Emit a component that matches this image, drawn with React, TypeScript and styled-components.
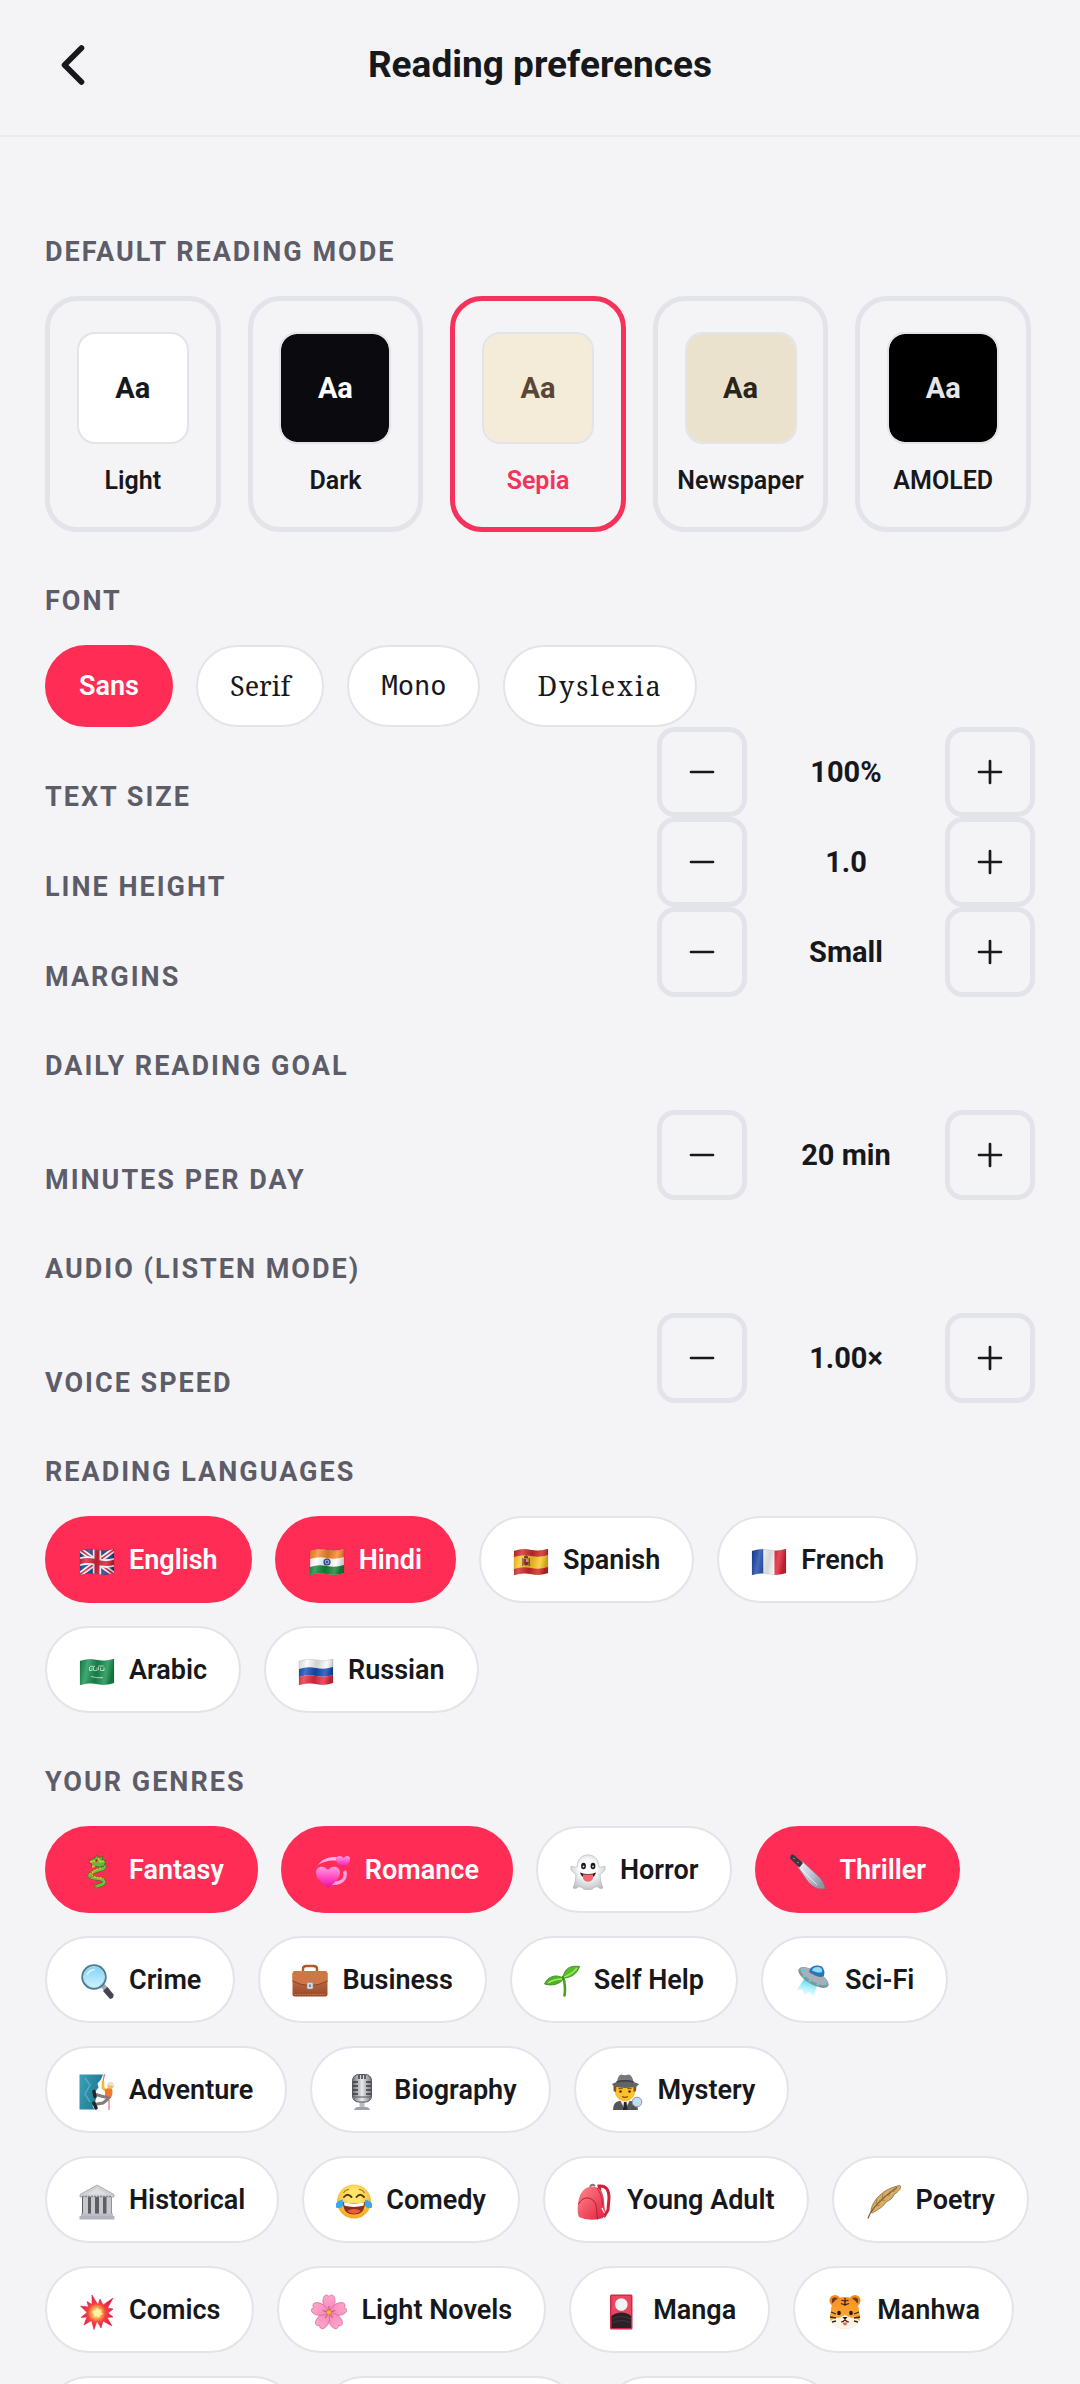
import React, { useState } from "react";
import styled, { createGlobalStyle } from "styled-components";

const color = {
  page: "#f4f4f7",
  ink: "#17181c",
  muted: "#5d5d69",
  line: "#e3e3ea",
  surface: "#ffffff",
  accent: "#ff2d55",
};

const GlobalStyle = createGlobalStyle`
  *, *::before, *::after { box-sizing: border-box; }
  body {
    margin: 0;
    background: ${color.page};
    color: ${color.ink};
    font-family: Roboto, "Noto Sans", sans-serif;
    -webkit-font-smoothing: antialiased;
  }
  button { font: inherit; color: inherit; cursor: pointer; margin: 0; }
`;

const Screen = styled.div`
  display: flex;
  flex-direction: column;
  height: 100vh;
  overflow: hidden;
  background: ${color.page};
`;

const Header = styled.header`
  flex: none;
  display: grid;
  grid-template-columns: 1fr auto 1fr;
  align-items: center;
  padding: 25px 45px 30px;
  border-bottom: 2px solid #ebebf0;
`;

const BackButton = styled.button`
  display: flex;
  align-items: center;
  justify-content: center;
  width: 56px;
  height: 80px;
  padding: 0;
  border: 0;
  background: none;
`;

const Title = styled.h1`
  margin: 0;
  font-size: 37px;
  line-height: 44px;
  font-weight: 700;
`;

const Content = styled.main`
  flex: 1;
  min-height: 0;
  overflow-y: auto;
  scrollbar-width: none;
  padding: 46px 45px;
`;

const SectionTitle = styled.h2`
  margin: 53px 0 28px;
  font-size: 27px;
  line-height: 32px;
  font-weight: 700;
  letter-spacing: 2px;
  text-transform: uppercase;
  color: ${color.muted};
`;

const ModeGrid = styled.div`
  display: grid;
  grid-template-columns: repeat(5, minmax(0, 1fr));
  gap: 27px;
  padding-right: 4px;
`;

const ModeCard = styled.button<{ $active: boolean }>`
  display: flex;
  flex-direction: column;
  align-items: center;
  gap: 22px;
  padding: 31px 0;
  border: 5px solid ${(p) => (p.$active ? "#f6315a" : color.line)};
  border-radius: 32px;
  background: none;
  color: ${(p) => (p.$active ? "#f6315a" : color.ink)};
  font-size: 25px;
  line-height: 30px;
  font-weight: 600;
`;

const Swatch = styled.span<{ $bg: string; $fg: string }>`
  display: flex;
  align-items: center;
  justify-content: center;
  width: 112px;
  height: 112px;
  border: 2px solid ${color.line};
  border-radius: 18px;
  background: ${(p) => p.$bg};
  background-clip: padding-box;
  color: ${(p) => p.$fg};
  font-size: 29px;
  font-weight: 700;
`;

const ChipRow = styled.div`
  display: flex;
  flex-wrap: wrap;
  gap: 23px;
`;

const Chip = styled.button<{ $active: boolean }>`
  display: inline-flex;
  align-items: center;
  gap: 14px;
  height: 87px;
  padding: 0 32px;
  border: 2px solid ${(p) => (p.$active ? color.accent : color.line)};
  border-radius: 44px;
  background: ${(p) => (p.$active ? color.accent : color.surface)};
  color: ${(p) => (p.$active ? "#fff" : color.ink)};
  font-size: 27px;
  line-height: 32px;
  font-weight: 600;
  white-space: nowrap;
`;

const PendingChip = styled.span<{ $width: number }>`
  width: ${(p) => p.$width}px;
  height: 87px;
  border: 2px solid ${color.line};
  border-radius: 44px;
  background: ${color.surface};
`;

const fontFaces = {
  sans: `font-family: Roboto, sans-serif; font-weight: 600;`,
  serif: `font-family: "Noto Serif", "Liberation Serif", serif; font-weight: 400;`,
  mono: `font-family: "DejaVu Sans Mono", monospace; font-weight: 400;`,
  dyslexia: `font-family: "Noto Serif", "Liberation Serif", serif; font-weight: 400; letter-spacing: 2px;`,
};

const FontChip = styled(Chip)<{ $face: keyof typeof fontFaces }>`
  height: 82px;
  ${(p) => fontFaces[p.$face]}
`;

const SettingRow = styled.div`
  display: flex;
  justify-content: space-between;
  align-items: flex-end;
`;

const SettingLabel = styled.span`
  font-size: 27px;
  line-height: 40px;
  font-weight: 700;
  letter-spacing: 2px;
  text-transform: uppercase;
  color: ${color.muted};
`;

const Stepper = styled.div`
  display: flex;
  align-items: center;
`;

const StepButton = styled.button`
  display: flex;
  align-items: center;
  justify-content: center;
  width: 90px;
  height: 90px;
  padding: 0;
  border: 5px solid ${color.line};
  border-radius: 18px;
  background: none;
`;

const StepValue = styled.output`
  width: 198px;
  text-align: center;
  font-size: 29px;
  line-height: 34px;
  font-weight: 700;
`;

/* ---------- pictograms, drawn on a 36 unit square ---------- */

const Pictogram = styled.svg`
  flex: none;
  width: 36px;
  height: 40px;
`;

const wave = (y: number, h: number) =>
  `M1 ${y + 1}Q9.5 ${y - 2} 18 ${y}T35 ${y - 1}V${y + h - 1}Q26.5 ${y + h + 2} 18 ${y + h}T1 ${y + h + 1}Z`;

const FlagShade = () => (
  <>
    <defs>
      <linearGradient id="flagShade" x1="0" x2="1" y1="0" y2="0.15">
        <stop offset="0" stopColor="#000" stopOpacity="0.12" />
        <stop offset="0.25" stopColor="#fff" stopOpacity="0.2" />
        <stop offset="0.55" stopColor="#000" stopOpacity="0.16" />
        <stop offset="0.82" stopColor="#fff" stopOpacity="0.16" />
        <stop offset="1" stopColor="#000" stopOpacity="0.2" />
      </linearGradient>
    </defs>
    <path d={wave(6, 24)} fill="url(#flagShade)" />
    <path d={wave(6, 24)} fill="none" stroke="#000" strokeOpacity="0.16" strokeWidth="0.7" />
  </>
);

const art: Record<string, React.ReactNode> = {
  uk: (
    <>
      <defs>
        <clipPath id="ukClip">
          <path d={wave(6, 24)} />
        </clipPath>
      </defs>
      <g clipPath="url(#ukClip)">
        <path d="M0 3h36v30H0z" fill="#1f3f94" />
        <path d="M0 5L36 31M0 31L36 5" stroke="#fff" strokeWidth="5" />
        <path d="M0 5L36 31M0 31L36 5" stroke="#d8233a" strokeWidth="1.8" />
        <path d="M18 2v32M0 18q9-3 18 0t18 0" stroke="#fff" strokeWidth="8.4" fill="none" />
        <path d="M18 2v32M0 18q9-3 18 0t18 0" stroke="#d8233a" strokeWidth="5" fill="none" />
      </g>
      <FlagShade />
    </>
  ),
  india: (
    <>
      <path d={wave(6, 24)} fill="#fff" />
      <path d={wave(6, 8)} fill="#f98a2b" />
      <path d={wave(22, 8)} fill="#16893a" />
      <circle cx="18" cy="18" r="3" fill="#a9b6e0" stroke="#1e3f96" strokeWidth="1.2" />
      <circle cx="18" cy="18" r="1" fill="#1e3f96" />
      <FlagShade />
    </>
  ),
  spain: (
    <>
      <path d={wave(6, 24)} fill="#fcc926" />
      <path d={wave(6, 6)} fill="#d3282c" />
      <path d={wave(24, 6)} fill="#d3282c" />
      <path d="M9 14h1.5v8H9zM15.5 14H17v8h-1.5z" fill="#8a5a2a" />
      <path d="M10.5 15h5v5q-2.5 3.5-5 0z" fill="#8f1f27" />
      <path d="M11 12.5l2-1.5 2 1.5v2h-4z" fill="#6b3415" />
      <path d="M13 15h2.5v3H13z" fill="#d9a06f" />
      <FlagShade />
    </>
  ),
  france: (
    <>
      <defs>
        <clipPath id="frClip">
          <path d={wave(6, 24)} />
        </clipPath>
      </defs>
      <g clipPath="url(#frClip)">
        <path d="M0 3h12.500v30H0z" fill="#1746a8" />
        <path d="M12.500 3h11v30h-11z" fill="#fff" />
        <path d="M23.500 3H36v30H23.500z" fill="#e4233b" />
      </g>
      <FlagShade />
    </>
  ),
  saudi: (
    <>
      <path d={wave(6, 24)} fill="#169250" />
      <path
        d="M10.5 13v3.500h2.500V13.500M14.500 13v3.500h3.500v-3M19.500 13v3.500M21.500 13.500v3h3.500v-3M11 12.300h5M19 12h5.500"
        stroke="#d5efdf"
        strokeWidth="0.9"
        fill="none"
      />
      <path d="M12 22.500q6 1.800 12 1.200" stroke="#d5efdf" strokeWidth="0.9" fill="none" />
      <FlagShade />
    </>
  ),
  russia: (
    <>
      <path d={wave(6, 24)} fill="#fafafa" />
      <path d={wave(14, 8)} fill="#1550b8" />
      <path d={wave(22, 8)} fill="#ec2d42" />
      <FlagShade />
    </>
  ),
  dragon: (
    <>
      <path
        d="M20 9c7 0 7 5 2 6.500s-12 3-11.500 6.500 13 1.500 14.500 5-5 4-8 5.500"
        fill="none"
        stroke="#3f7a26"
        strokeWidth="4"
        strokeLinecap="round"
      />
      <path
        d="M20 9c7 0 7 5 2 6.500s-12 3-11.500 6.500 13 1.500 14.500 5-5 4-8 5.500"
        fill="none"
        stroke="#74c044"
        strokeWidth="2.600"
        strokeLinecap="round"
      />
      <path
        d="M21 11.500c3 1 1 2.500-2 3.500s-7 3-6 6 9 2 12 4"
        fill="none"
        stroke="#f2c53c"
        strokeWidth="1.300"
        strokeDasharray="2 1"
      />
      <path d="M11 6l5-2 2-3 1.500 3L24 2l-1 4 4 1-2 5-5 1-4-1-4 1 1-3-3-1z" fill="#6ab53c" stroke="#3a6d22" strokeWidth=".8" />
      <path d="M11 8l5-1M19 4l2 4 4-1M16 12l-3 1" stroke="#e8b936" strokeWidth="1.400" fill="none" />
      <circle cx="17.500" cy="6.500" r="1" fill="#8c1d17" />
      <path d="M13 19l-3-2M24 24l4-1M17 32l-1 3.500M12 23l-2 2" stroke="#c4572a" strokeWidth="1.300" />
    </>
  ),
  hearts: (
    <>
      <defs>
        <linearGradient id="heartFill" x1="0" x2="0" y1="0" y2="1">
          <stop offset="0" stopColor="#ff9de4" />
          <stop offset="0.55" stopColor="#ff45c0" />
          <stop offset="1" stopColor="#e3119a" />
        </linearGradient>
      </defs>
      <path d="M3 11C7 5 14 2.500 22 3l-1 3.500C14 6 8 7.500 3 11z" fill="#ffb0ea" />
      <path d="M31 16c3 8-2 16-15 15l3-4c7 1 11-3 9-9z" fill="#ffa4e6" />
      <path d="M13 34C6 29 1 24 1 18.500 1 12 9 10.500 13 16c4-5.500 12-4 12 2.500C25 24 20 29 13 34z" fill="url(#heartFill)" />
      <path d="M28.500 14C24 11 21 8.500 21 5.500c0-4 5-4.800 7.500-1.500C31 .700 36 1.500 35 5.500c0 3-2.500 5.500-6.500 8.500z" fill="url(#heartFill)" />
    </>
  ),
  ghost: (
    <>
      <defs>
        <radialGradient id="ghostFill" cx="0.5" cy="0.4" r="0.65">
          <stop offset="0.4" stopColor="#fbfbfc" />
          <stop offset="1" stopColor="#b9bcc2" />
        </radialGradient>
      </defs>
      <path
        d="M18 1C10.500 1 7.500 6.500 7 13 5.500 14.500 3 11.500 1 12.500c-1 3 2 6.500 5 7.500-.3 5-1 10-3 14 2.500 1.500 4.500-.5 6-1.500 2 .5 3 1 4.500 2.500q4.500 2 9 0c1.500-1.500 2.500-2 4.500-2.500 1.500 1 3.500 3 6 1.500-2-4-2.700-9-3-14 3-1 6-4.500 5-7.500-2-1-4.500 2-6 .5C28.500 6.500 25.500 1 18 1z"
        fill="url(#ghostFill)"
        stroke="#b4b7bd"
        strokeWidth=".7"
      />
      <ellipse cx="13.500" cy="12" rx="2.400" ry="3.200" fill="#17191d" />
      <ellipse cx="23" cy="12" rx="2.400" ry="3.200" fill="#17191d" />
      <circle cx="13.500" cy="12.500" r=".9" fill="#d6d7dc" />
      <circle cx="23" cy="12.500" r=".9" fill="#d6d7dc" />
      <path d="M10 18.500q8 3 16 0-1 4-4 5h-8q-3-1-4-5z" fill="#3c1b1d" />
      <path d="M13 20.500h10V24q-1 3.800-5 3.800T13 24z" fill="#f26a6e" />
    </>
  ),
  knife: (
    <>
      <defs>
        <linearGradient id="blade" x1="0" x2="1" y1="0" y2="0.7">
          <stop offset="0" stopColor="#f4f6fa" />
          <stop offset="0.5" stopColor="#c5ccd8" />
          <stop offset="1" stopColor="#8c95a6" />
        </linearGradient>
      </defs>
      <path d="M9 13l4.500-5.500L31 24c3 3.500 4.500 7 4.500 10.500-6 1-11-1-16-6.500z" fill="url(#blade)" stroke="#7d8595" strokeWidth=".6" />
      <path d="M12 15l16 16" stroke="#fff" strokeWidth="1" opacity=".7" />
      <path d="M1.500 2Q3-.500 5.500 1.500L14 9l-3.500 4.500L2 5.500Q.500 4 1.500 2z" fill="#38383e" />
      <circle cx="5" cy="4.500" r=".7" fill="#aaa" />
      <circle cx="9" cy="8.500" r=".7" fill="#aaa" />
    </>
  ),
  magnifier: (
    <>
      <defs>
        <linearGradient id="lens" x1="0" x2="0" y1="0" y2="1">
          <stop offset="0" stopColor="#7fd3f7" />
          <stop offset="1" stopColor="#d2f3ff" />
        </linearGradient>
      </defs>
      <path d="M22 23l3.500-3 3.500 4-3.500 3.500z" fill="#a2a6ae" />
      <path d="M24 27l4.500-4 6 7.500q.5 4-3.500 4.500z" fill="#47424f" />
      <circle cx="15" cy="13" r="11.500" fill="url(#lens)" stroke="#4c7c93" strokeWidth="2.400" />
      <circle cx="15" cy="13" r="10.500" fill="none" stroke="#b4e5f7" strokeWidth="1" />
      <path d="M8 11q2-5 8-5.500" stroke="#fff" strokeWidth="1.500" fill="none" opacity=".7" />
    </>
  ),
  briefcase: (
    <>
      <defs>
        <linearGradient id="leather" x1="0" x2="0" y1="0" y2="1">
          <stop offset="0" stopColor="#cf7a48" />
          <stop offset="1" stopColor="#99492a" />
        </linearGradient>
      </defs>
      <path d="M11 8V5q0-3 3.500-3h7Q25 2 25 5v3" fill="none" stroke="#b3582c" strokeWidth="2.400" />
      <rect x="0.500" y="7" width="35" height="25.500" rx="2.500" fill="url(#leather)" />
      <path d="M.500 9.500Q1 7 3 7h30q2 0 2.500 2.500V17Q27 21.500 18 21.500T.500 17z" fill="#cc7745" />
      <path d="M.500 17Q9 21.500 18 21.500T35.500 17" fill="none" stroke="#8b4325" strokeWidth="1" />
      <path d="M2.500 30.500h31" stroke="#d99a72" strokeWidth=".6" strokeDasharray="1.500 1" />
      <rect x="15" y="18.500" width="6" height="6.500" rx="1" fill="#d7dbe1" stroke="#888f99" strokeWidth=".6" />
      <path d="M18 20.500v2.500" stroke="#4c5158" strokeWidth="1.300" />
    </>
  ),
  seedling: (
    <>
      <path d="M19 13q3 9 1.500 18.500" fill="none" stroke="#4f9e25" strokeWidth="2.600" strokeLinecap="round" />
      <path d="M19 14C20 5 26 1 35.500 2.500 33 10 27 14 19 14z" fill="#58bd2b" stroke="#2e8118" strokeWidth=".8" />
      <path d="M20 13q7-2 13-9" stroke="#a8e86d" strokeWidth="1.300" fill="none" />
      <path d="M19.500 14.500C13 9.500 4 12 .500 20 7 22 16 21 19.500 14.500z" fill="#50b327" stroke="#2e8118" strokeWidth=".8" />
      <path d="M18 15Q10 15 4 19" stroke="#a8e86d" strokeWidth="1.300" fill="none" />
    </>
  ),
  ufo: (
    <>
      <defs>
        <linearGradient id="beam" x1="0.6" x2="0.4" y1="0" y2="1">
          <stop offset="0" stopColor="#43dcef" />
          <stop offset="1" stopColor="#b5f7fd" stopOpacity="0.2" />
        </linearGradient>
      </defs>
      <path d="M9 15L2 26l5-.500L10 31l4-3 5 5 3-13z" fill="url(#beam)" />
      <ellipse cx="18.500" cy="13.500" rx="17" ry="7" transform="rotate(30 18.500 13.500)" fill="#8b9196" />
      <ellipse cx="19" cy="12.300" rx="15.500" ry="5.200" transform="rotate(30 19 12.300)" fill="#a9afb4" />
      <path d="M14 8q1-7 9-6.500T29 12q-4 2-9-.500T14 8z" fill="#2876b8" />
      <path d="M17 6.500q1-4 6-3.500t4 5q-3 1-6 0t-4-1.500z" fill="#8fdcf5" />
      <g fill="#3fd8ea">
        <circle cx="8" cy="6.500" r="1.500" />
        <circle cx="9" cy="12" r="1.500" />
        <circle cx="15" cy="16.500" r="1.500" />
        <circle cx="23" cy="20" r="1.500" />
        <circle cx="30" cy="19.500" r="1.500" />
      </g>
    </>
  ),
  climber: (
    <>
      <defs>
        <linearGradient id="cliff" x1="0" x2="1" y1="0" y2="0.4">
          <stop offset="0" stopColor="#3c9fb8" />
          <stop offset="1" stopColor="#1d788f" />
        </linearGradient>
      </defs>
      <path d="M.500.500H24l-2 5-3.500 4 1 4-4 5 2 4-1.500 6-2.500 3.500 2 3.500H.500z" fill="url(#cliff)" />
      <path d="M6 4l5 7-5 9 5 8" stroke="#67bfd2" strokeWidth="1.500" fill="none" opacity=".6" />
      <path d="M25.500 0q-2 7-1.500 13M30 26v10" stroke="#e2717c" strokeWidth="1.200" fill="none" />
      <path d="M24 8v6l4 4" stroke="#f5b63a" strokeWidth="2.600" fill="none" strokeLinecap="round" />
      <path d="M26 15l6-1.500q3 4 0 10.500l-6-.5z" fill="#f0792e" />
      <path d="M30 24l-8-2-5-1.500M29 25l-5 4-6 1" stroke="#857a7e" strokeWidth="3" fill="none" strokeLinecap="round" />
      <path d="M15 17.500l1 5M15 29l2 5" stroke="#24252c" strokeWidth="3.400" strokeLinecap="round" />
      <circle cx="31.500" cy="11.500" r="3.200" fill="#f7c15a" />
      <path d="M28.500 11.500q.500-3.500 4-3.300t3 5q-3-2.400-7-1.700z" fill="#dfe3e8" />
    </>
  ),
  mic: (
    <>
      <defs>
        <linearGradient id="micBody" x1="0" x2="1" y1="0" y2="0">
          <stop offset="0" stopColor="#6f7176" />
          <stop offset="0.5" stopColor="#e9eaed" />
          <stop offset="1" stopColor="#76787d" />
        </linearGradient>
      </defs>
      <path d="M15.500 28h5v6h-5z" fill="#b7bac0" />
      <path d="M10 36q1-3 4-3h8q3 0 4 3z" fill="#9fa2a8" />
      <rect x="8.500" y=".500" width="19" height="27.500" rx="6" fill="url(#micBody)" stroke="#55575c" strokeWidth="1" />
      <path
        d="M9 8h5M9 12h5M9 16h5M9 20h5M22 8h5M22 12h5M22 16h5M22 20h5M15 1v4M18 1v4M21 1v4"
        stroke="#3b3d42"
        strokeWidth="1.500"
      />
      <path d="M9 23h18" stroke="#66696f" strokeWidth="1.200" />
    </>
  ),
  detective: (
    <>
      <path d="M5 36q0-8 6-9h13q6 1 6 9z" fill="#56575d" />
      <path d="M12 26l5 10 5-10z" fill="#eef0f4" />
      <path d="M16 28h2.500l1 8h-4.500z" fill="#26272c" />
      <path d="M6.500 12h21q1 14-10.500 15.500Q5.500 26 6.500 12z" fill="#fbc02e" />
      <path d="M5.500 11h3l-.500 7-2.500-1zM25.500 11h3l-.500 6-2.500 1z" fill="#8a5020" />
      <circle cx="12.500" cy="17.500" r="1.300" fill="#4a2c12" />
      <circle cx="21.500" cy="17.500" r="1.300" fill="#4a2c12" />
      <path d="M10.500 15q2-1.500 4 0M19.500 15q2-1.500 4 0M14 22.500q3 1.800 6 0" stroke="#7d4a12" strokeWidth="1.100" fill="none" />
      <path d="M9 8q1-7.500 4.500-7.500 3.500 1.300 7 0 3.500 0 5 7.500z" fill="#76797d" />
      <path d="M4 10q5-3 13-3T31 10q-1 3.500-13.500 4Q5 13.500 4 10z" fill="#606367" />
      <path d="M8.500 8q8.500-2.500 17 0" stroke="#3a3c40" strokeWidth="1.500" fill="none" />
      <circle cx="29" cy="28" r="4.800" fill="#c4dcf2" stroke="#8f97a3" strokeWidth="1" />
      <path d="M26 32l-2 4" stroke="#4b4e55" strokeWidth="1.800" />
    </>
  ),
  museum: (
    <>
      <path d="M18 1L35 10.500V13H1v-2.500z" fill="#cfd0d3" stroke="#97989d" strokeWidth=".7" />
      <path d="M18 4l10.500 6.500h-21z" fill="#dedfe2" />
      <path d="M3 13h30v17H3z" fill="#5d5e63" />
      <path d="M4 13h5v17H4zM12 13h4v17h-4zM20 13h4v17h-4zM27.500 13h5v17h-5z" fill="#c7c8cd" />
      <path d="M3 12.500h30" stroke="#85868b" strokeWidth="1.400" strokeDasharray="2 1" />
      <path d="M2 29.500h32V32H2z" fill="#bdbbc5" />
      <path d="M.500 32h35v3.500H.500z" fill="#b4b0be" />
    </>
  ),
  joy: (
    <>
      <defs>
        <radialGradient id="faceFill" cx="0.5" cy="0.35" r="0.65">
          <stop offset="0.3" stopColor="#ffe66b" />
          <stop offset="1" stopColor="#f3a51f" />
        </radialGradient>
      </defs>
      <circle cx="18" cy="17.500" r="17" fill="url(#faceFill)" />
      <path d="M8 13q3.500-4.500 7.500 0M20.500 13q3.500-4.500 7.500 0" stroke="#5f3512" strokeWidth="1.900" fill="none" strokeLinecap="round" />
      <path d="M7.500 9q2-3.500 5.500-3.500M28.500 9q-2-3.500-5.500-3.500" stroke="#a8701c" strokeWidth="1.200" fill="none" />
      <path d="M7 18q11 3 22 0 0 12.500-11 12.500T7 18z" fill="#8d2f17" />
      <path d="M8 18.300q10 2.800 20 0l-.500 3.500q-9.500 2.200-19 0z" fill="#fff" />
      <path d="M11 27q7-4 14 0-7 5.500-14 0z" fill="#ee5a3c" />
      <path d="M6.500 15.500q2.500 8.500-3.500 8.500T0 19.500q2-3 6.500-4zM29.500 15.500Q27 24 33 24t3-4.500q-2-3-6.500-4z" fill="#37a8ec" />
    </>
  ),
  backpack: (
    <>
      <defs>
        <linearGradient id="packFill" x1="0" x2="1" y1="0" y2="1">
          <stop offset="0" stopColor="#ff8a8d" />
          <stop offset="1" stopColor="#e31f40" />
        </linearGradient>
      </defs>
      <path d="M22 2q10-1 10 12l-1 12-3 5-2-5z" fill="none" stroke="#cf2038" strokeWidth="3" />
      <path d="M13 3q2-4 5-1" stroke="#77787e" strokeWidth="2" fill="none" />
      <path d="M1 20Q3 3 15 2.500q11 0 12 14l1 14q-1 4-6 4.500-12 2-20-2Q0 29 1 20z" fill="url(#packFill)" />
      <path d="M1.500 20q4-7 10-6 7 1.500 8 9.500l1 12" fill="none" stroke="#b81d36" strokeWidth="1" />
      <path d="M20 4q5 6 5.500 17" fill="none" stroke="#c4243d" strokeWidth="1" />
      <path d="M25 24l2.500 5" stroke="#e6e7ec" strokeWidth="1.500" />
    </>
  ),
  feather: (
    <>
      <path d="M5 28C5 17 18 4 34 1.500c2 2-1 6-6 9-1 4-5 6-8 7.500-2 4-8 8-14 11z" fill="#d4ad6b" stroke="#8e6930" strokeWidth=".8" />
      <path d="M2 34.500Q6 21 31 3.500" stroke="#7f5b28" strokeWidth="1.200" fill="none" />
      <path d="M9 22l5-1M13 17l6-1M18 12l6-1M23 8l6-1M10 20l1-5M16 14l1-5" stroke="#a57e40" strokeWidth=".9" />
    </>
  ),
  collision: (
    <>
      <defs>
        <radialGradient id="blast" cx="0.5" cy="0.52" r="0.5">
          <stop offset="0.1" stopColor="#fffbd0" />
          <stop offset="0.3" stopColor="#ffb04b" />
          <stop offset="0.55" stopColor="#f4433f" />
          <stop offset="1" stopColor="#e6164f" />
        </radialGradient>
      </defs>
      <path
        d="M13 1l6 10 2-6 3 6 10-7-5.500 10L34 15l-5 4 5 4-6 .500L33 32l-9-5-2 7-4-7-3 8.500-2.500-9L5 31l3-8-6 .500 6-5L1.500 12l8 1L8 7.500l5 3z"
        fill="url(#blast)"
        stroke="#e5223d"
        strokeWidth=".6"
      />
      <path d="M18.500 13.500l1.500 3 3-1-1.500 3 2.500 1.500-3 1-1 3-2-2.500-3 1 1-3-2.500-2 3-1z" fill="#fff3a6" />
    </>
  ),
  blossom: (
    <>
      <defs>
        <linearGradient id="petal" x1="0" x2="0" y1="0" y2="1">
          <stop offset="0" stopColor="#ffa7cd" />
          <stop offset="1" stopColor="#f285b4" />
        </linearGradient>
      </defs>
      {[0, 72, 144, 216, 288].map((a) => (
        <g key={a} transform={`rotate(${a} 18 18.500)`}>
          <path
            d="M18 18.500C10 12 11 3 14.500 1q2.500-.5 3.500 1.500 1-2 3.500-1.500C25 3 26 12 18 18.500z"
            fill="url(#petal)"
            stroke="#d9629a"
            strokeWidth=".7"
          />
          <path d="M18 16v-4" stroke="#d24d88" strokeWidth="1" />
        </g>
      ))}
      <circle cx="18" cy="18.500" r="2.600" fill="#f3b53d" stroke="#b96a26" strokeWidth=".6" />
    </>
  ),
  card: (
    <>
      <rect x="7" y=".500" width="22.500" height="35" rx="1.500" fill="#d32749" />
      <path d="M8.500 2H28v20H8.500z" fill="#e6485f" />
      <circle cx="18.300" cy="10.500" r="6.300" fill="#f3f2f4" />
      <path d="M8.500 22q4-3.500 10-3.500T28 22v12H8.500z" fill="#2b2026" />
      <path d="M9 25q9-5 19 0M9 29q9-5 19 0" stroke="#4a3a42" strokeWidth=".8" fill="none" />
    </>
  ),
  tiger: (
    <>
      <defs>
        <linearGradient id="tigerFill" x1="0" x2="0" y1="0" y2="1">
          <stop offset="0" stopColor="#f7921e" />
          <stop offset="1" stopColor="#ffb140" />
        </linearGradient>
      </defs>
      <circle cx="8" cy="6.500" r="5.500" fill="#ee8a1e" />
      <circle cx="28" cy="6.500" r="5.500" fill="#ee8a1e" />
      <circle cx="8" cy="6.800" r="3.200" fill="#6d3a14" />
      <circle cx="28" cy="6.800" r="3.200" fill="#6d3a14" />
      <path d="M18 3C9 3 4 9 4 17q-2 5-.5 10Q8 34.500 18 35q10-.5 14.500-8 1.500-5-.5-10C32 9 27 3 18 3z" fill="url(#tigerFill)" />
      <path d="M3.500 27q4-4 8-3l6.500-3 6.500 3q4-1 8 3-4 8-14.500 8T3.500 27z" fill="#fbf4e6" />
      <path
        d="M18 4v8M14.500 6q3.500 2 7 0M14 9.500q4 2 8 0M4 18l5 2M3 23l6 1M32 18l-5 2M33 23l-6 1M5 28l4-1M31 28l-4-1"
        stroke="#3a2410"
        strokeWidth="1.300"
        fill="none"
      />
      <ellipse cx="12" cy="19" rx="1.800" ry="2.300" fill="#26180e" />
      <ellipse cx="24" cy="19" rx="1.800" ry="2.300" fill="#26180e" />
      <path d="M15.500 23h5L18 26z" fill="#26180e" />
      <path d="M14 28q2 0 4-2 2 2 4 2" stroke="#4d2d14" strokeWidth="1.200" fill="none" />
      <path d="M16 28.500h4q0 3-2 3t-2-3z" fill="#ef5e6a" />
    </>
  ),
};

const Emoji = ({ name }: { name: string }) => (
  <Pictogram viewBox="0 -4 36 40" aria-hidden="true">
    {art[name]}
  </Pictogram>
);

/* ---------- data ---------- */

const modes = [
  { name: "Light", bg: "#ffffff", fg: "#17181c" },
  { name: "Dark", bg: "#0a0a0f", fg: "#ffffff" },
  { name: "Sepia", bg: "#f4ebd9", fg: "#5b4636" },
  { name: "Newspaper", bg: "#eae2cc", fg: "#2a241a" },
  { name: "AMOLED", bg: "#000000", fg: "#e6e6e8" },
];

const fonts: { name: string; face: keyof typeof fontFaces }[] = [
  { name: "Sans", face: "sans" },
  { name: "Serif", face: "serif" },
  { name: "Mono", face: "mono" },
  { name: "Dyslexia", face: "dyslexia" },
];

const languages = [
  ["English", "uk"],
  ["Hindi", "india"],
  ["Spanish", "spain"],
  ["French", "france"],
  ["Arabic", "saudi"],
  ["Russian", "russia"],
];

const genres = [
  ["Fantasy", "dragon"],
  ["Romance", "hearts"],
  ["Horror", "ghost"],
  ["Thriller", "knife"],
  ["Crime", "magnifier"],
  ["Business", "briefcase"],
  ["Self Help", "seedling"],
  ["Sci-Fi", "ufo"],
  ["Adventure", "climber"],
  ["Biography", "mic"],
  ["Mystery", "detective"],
  ["Historical", "museum"],
  ["Comedy", "joy"],
  ["Young Adult", "backpack"],
  ["Poetry", "feather"],
  ["Comics", "collision"],
  ["Light Novels", "blossom"],
  ["Manga", "card"],
  ["Manhwa", "tiger"],
];

/* widths of the chips that close the list while more genres load */
const pendingGenres = [252, 260, 232];

/* ---------- parts ---------- */

type StepProps = { label: string; values: string[]; start: number };

const StepperRow = ({ label, values, start }: StepProps) => {
  const [index, setIndex] = useState(start);
  const move = (by: number) => setIndex((i) => Math.min(values.length - 1, Math.max(0, i + by)));
  return (
    <SettingRow role="group" aria-label={label}>
      <SettingLabel>{label}</SettingLabel>
      <Stepper>
        <StepButton type="button" aria-label={`Decrease ${label}`} onClick={() => move(-1)}>
          <svg width="28" height="28" viewBox="0 0 28 28" fill="none" stroke="currentColor" strokeWidth="2.7" strokeLinecap="round">
            <path d="M3 14h22" />
          </svg>
        </StepButton>
        <StepValue>{values[index]}</StepValue>
        <StepButton type="button" aria-label={`Increase ${label}`} onClick={() => move(1)}>
          <svg width="28" height="28" viewBox="0 0 28 28" fill="none" stroke="currentColor" strokeWidth="2.7" strokeLinecap="round">
            <path d="M3 14h22M14 3v22" />
          </svg>
        </StepButton>
      </Stepper>
    </SettingRow>
  );
};

type ChipGroupProps = { items: string[][]; initial: string[]; pending?: number[] };

const ChipGroup = ({ items, initial, pending = [] }: ChipGroupProps) => {
  const [picked, setPicked] = useState(initial);
  const toggle = (name: string) =>
    setPicked((list) => (list.includes(name) ? list.filter((n) => n !== name) : [...list, name]));
  return (
    <ChipRow>
      {items.map(([name, icon]) => {
        const on = picked.includes(name);
        return (
          <Chip key={name} type="button" $active={on} aria-pressed={on} onClick={() => toggle(name)}>
            <Emoji name={icon} />
            {name}
          </Chip>
        );
      })}
      {pending.map((width) => (
        <PendingChip key={width} $width={width} aria-hidden="true" />
      ))}
    </ChipRow>
  );
};

export default function App() {
  const [mode, setMode] = useState("Sepia");
  const [font, setFont] = useState("Sans");

  return (
    <Screen>
      <GlobalStyle />
      <Header>
        <BackButton type="button" aria-label="Back">
          <svg width="28" height="42" viewBox="0 0 28 42" fill="none" stroke="currentColor" strokeWidth="5.6" strokeLinecap="round" strokeLinejoin="round">
            <path d="M22.500 4L5.500 21l17 17" />
          </svg>
        </BackButton>
        <Title>Reading preferences</Title>
      </Header>
      <Content>
        <SectionTitle>Default reading mode</SectionTitle>
        <ModeGrid>
          {modes.map((m) => (
            <ModeCard
              key={m.name}
              type="button"
              $active={mode === m.name}
              aria-pressed={mode === m.name}
              onClick={() => setMode(m.name)}
            >
              <Swatch $bg={m.bg} $fg={m.fg}>
                Aa
              </Swatch>
              {m.name}
            </ModeCard>
          ))}
        </ModeGrid>

        <SectionTitle>Font</SectionTitle>
        <ChipRow>
          {fonts.map((f) => (
            <FontChip
              key={f.name}
              type="button"
              $face={f.face}
              $active={font === f.name}
              aria-pressed={font === f.name}
              onClick={() => setFont(f.name)}
            >
              {f.name}
            </FontChip>
          ))}
        </ChipRow>
        <StepperRow label="Text size" values={["90%", "100%", "110%", "120%"]} start={1} />
        <StepperRow label="Line height" values={["1.0", "1.2", "1.4", "1.6"]} start={0} />
        <StepperRow label="Margins" values={["Small", "Medium", "Large"]} start={0} />

        <SectionTitle>Daily reading goal</SectionTitle>
        <StepperRow label="Minutes per day" values={["10 min", "15 min", "20 min", "25 min"]} start={2} />

        <SectionTitle>Audio (listen mode)</SectionTitle>
        <StepperRow label="Voice speed" values={["0.75×", "1.00×", "1.25×", "1.50×"]} start={1} />

        <SectionTitle>Reading languages</SectionTitle>
        <ChipGroup items={languages} initial={["English", "Hindi"]} />

        <SectionTitle>Your genres</SectionTitle>
        <ChipGroup items={genres} initial={["Fantasy", "Romance", "Thriller"]} pending={pendingGenres} />
      </Content>
    </Screen>
  );
}
